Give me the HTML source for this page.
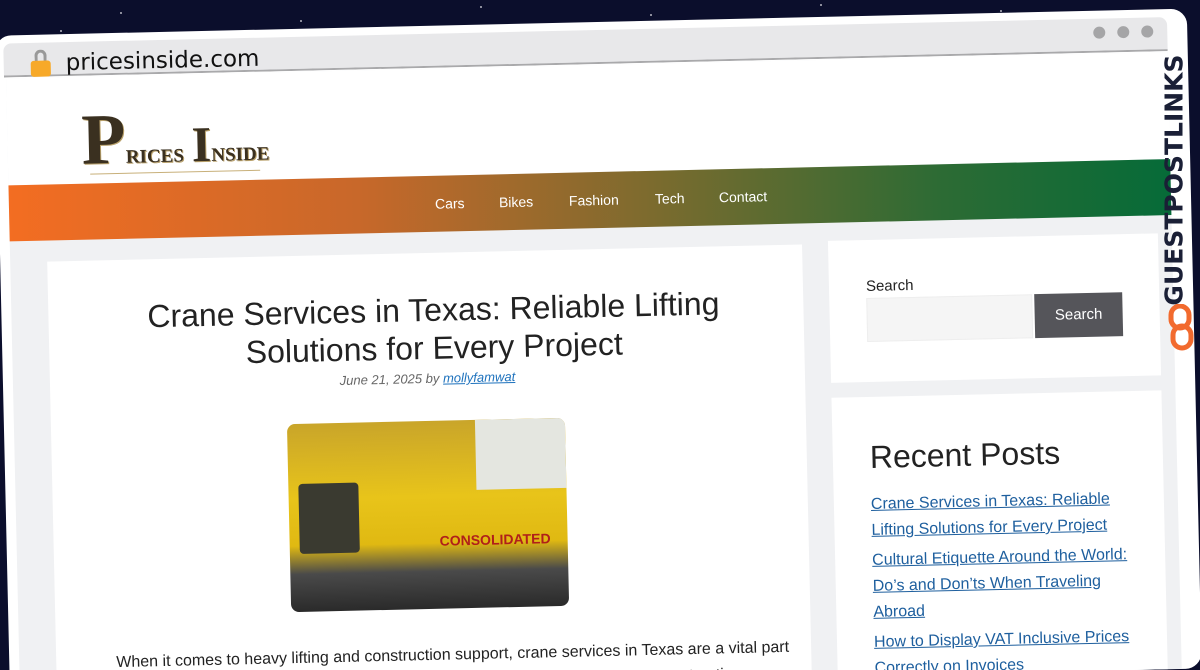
<!DOCTYPE html>
<html><head><meta charset="utf-8"><style>
*{margin:0;padding:0;box-sizing:border-box}
html,body{width:1200px;height:670px;overflow:hidden}
body{background:#0b0e2c;font-family:"Liberation Sans",sans-serif;position:relative}
.star{position:absolute;width:2px;height:2px;background:#fff;border-radius:50%;opacity:.7}
#w{position:absolute;left:2px;top:22px;width:1192px;height:660px;background:#fff;border-radius:16px;transform:rotate(-1.3deg);transform-origin:600px 313px;overflow:hidden}
.chrome{position:absolute;left:8px;top:8px;right:20px;height:34px;background:#e8e8ea;border-bottom:2px solid #a9a9ab;border-radius:8px 8px 0 0}
.url{position:absolute;left:70px;top:16px;font-size:23px;color:#111;font-family:"DejaVu Sans","Liberation Sans",sans-serif}
.lock{position:absolute;left:35px;top:26px;width:20px;height:16px;background:#f7a929;border-radius:3px}
.lockt{position:absolute;left:39px;top:15px;width:12px;height:14px;border:3px solid #999;border-bottom:none;border-radius:6px 6px 0 0}
.dot{position:absolute;top:16px;width:12px;height:12px;border-radius:50%;background:#a5a5a7}
.page{position:absolute;left:10px;top:43px;right:20px;bottom:0;background:#f0f1f3}
.head{position:absolute;left:0;top:0;right:0;height:107px;background:#fff}
.nav{position:absolute;left:0;top:107px;right:0;height:56px;background:linear-gradient(90deg,#f36d22 0%,#c8682a 30%,#7d6b2e 55%,#2d6b34 80%,#066b38 100%)}
.nav span{position:absolute;top:20px;color:#fff;font-size:14px}
.card{position:absolute;background:#fff}
h1{position:absolute;left:45px;width:680px;top:38px;text-align:center;font-weight:normal;font-size:32px;line-height:38px;color:#222}
.meta{position:absolute;left:0;width:755px;top:118px;text-align:center;font-size:13px;font-style:italic;color:#666}
.meta a{color:#1e72bd}
a{color:#1e5f9e}
.rp a{display:block;font-size:16px;line-height:26px;margin-bottom:4px;color:#1e5f9e;text-decoration:underline}
</style></head><body>
<div class="star" style="left:120px;top:12px"></div><div class="star" style="left:300px;top:20px"></div><div class="star" style="left:480px;top:6px"></div><div class="star" style="left:650px;top:14px"></div><div class="star" style="left:820px;top:4px"></div><div class="star" style="left:1000px;top:10px"></div><div class="star" style="left:60px;top:30px"></div><div class="star" style="left:14px;top:480px"></div>
<div id="w">
 <div class="chrome"></div>
 <div class="lockt"></div><div class="lock"></div>
 <div class="url">pricesinside.com</div>
 <div class="dot" style="left:1098px"></div><div class="dot" style="left:1122px"></div><div class="dot" style="left:1146px"></div>
 <div class="page">
  <div class="head">
   <div style="position:absolute;left:74px;top:28px;font-family:'Liberation Serif',serif;font-weight:bold;color:#3a3020;text-shadow:1px 1px 0 #b8a06a;line-height:70px;white-space:nowrap">
    <span style="font-size:72px">P</span><span style="font-size:19px">RICES</span>&nbsp;&nbsp;<span style="font-size:50px">I</span><span style="font-size:19px">NSIDE</span>
   </div>
   <div style="position:absolute;left:82px;top:97px;width:170px;height:1px;background:#c8b07a"></div>
  </div>
  <div class="nav">
   <span style="left:426px">Cars</span><span style="left:490px">Bikes</span><span style="left:560px">Fashion</span><span style="left:646px">Tech</span><span style="left:710px">Contact</span>
  </div>
  <div class="card" style="left:37px;top:184px;width:755px;height:500px">
   <h1>Crane Services in Texas: Reliable Lifting Solutions for Every Project</h1>
   <div class="meta">June 21, 2025 by <a href="#">mollyfamwat</a></div>
   <div style="position:absolute;left:236px;top:168px;width:278px;height:188px;border-radius:8px;overflow:hidden;background:linear-gradient(180deg,#c9a52a 0%,#e8c41a 40%,#e0b912 65%,#4a4a4a 80%,#2a2a2a 100%)">
    <div style="position:absolute;left:10px;top:60px;width:60px;height:70px;background:#3a3a30;border-radius:4px"></div>
    <div style="position:absolute;right:0;top:0;width:90px;height:70px;background:#e4e6e0"></div>
    <div style="position:absolute;left:150px;top:112px;color:#b0201a;font-weight:bold;font-size:14px">CONSOLIDATED</div>
   </div>
   <div style="position:absolute;left:60px;top:390px;width:680px;font-size:16px;line-height:26px;color:#222">When it comes to heavy lifting and construction support, crane services in Texas are a vital part of countless projects. Whether in busy cities or remote Texas regions, when construction</div>
  </div>
  <div class="card" style="left:818px;top:181px;width:330px;height:142px">
   <div style="position:absolute;left:37px;top:38px;font-size:15px;color:#222">Search</div>
   <div style="position:absolute;left:37px;top:58px;width:166px;height:44px;background:#f5f5f5;border:1px solid #eee"></div>
   <div style="position:absolute;left:205px;top:58px;width:88px;height:44px;background:#55555a;color:#fff;font-size:15px;text-align:center;line-height:44px">Search</div>
  </div>
  <div class="card" style="left:818px;top:338px;width:330px;height:400px">
   <div style="position:absolute;left:37px;top:42px;font-size:32px;color:#222">Recent Posts</div>
   <div class="rp" style="position:absolute;left:37px;top:95px;width:270px">
    <a href="#">Crane Services in Texas: Reliable Lifting Solutions for Every Project</a>
    <a href="#">Cultural Etiquette Around the World: Do’s and Don’ts When Traveling Abroad</a>
    <a href="#">How to Display VAT Inclusive Prices Correctly on Invoices</a>
   </div>
  </div>
 </div>
</div>
<div style="position:absolute;left:1154px;top:60px;width:40px;height:240px;">
 <div style="position:absolute;left:20px;top:120px;transform:translate(-50%,-50%) rotate(-90deg);font-family:'DejaVu Sans',sans-serif;font-weight:bold;font-size:25px;color:#1a1f36;white-space:nowrap">GUESTPOSTLINKS</div>
</div>
<svg style="position:absolute;left:1168px;top:304px" width="26" height="48" viewBox="0 0 26 48"><rect x="3" y="2" width="18" height="22" rx="9" fill="none" stroke="#f26a2e" stroke-width="5"/><rect x="5" y="22" width="18" height="22" rx="9" fill="none" stroke="#f26a2e" stroke-width="5"/></svg>
</body></html>
